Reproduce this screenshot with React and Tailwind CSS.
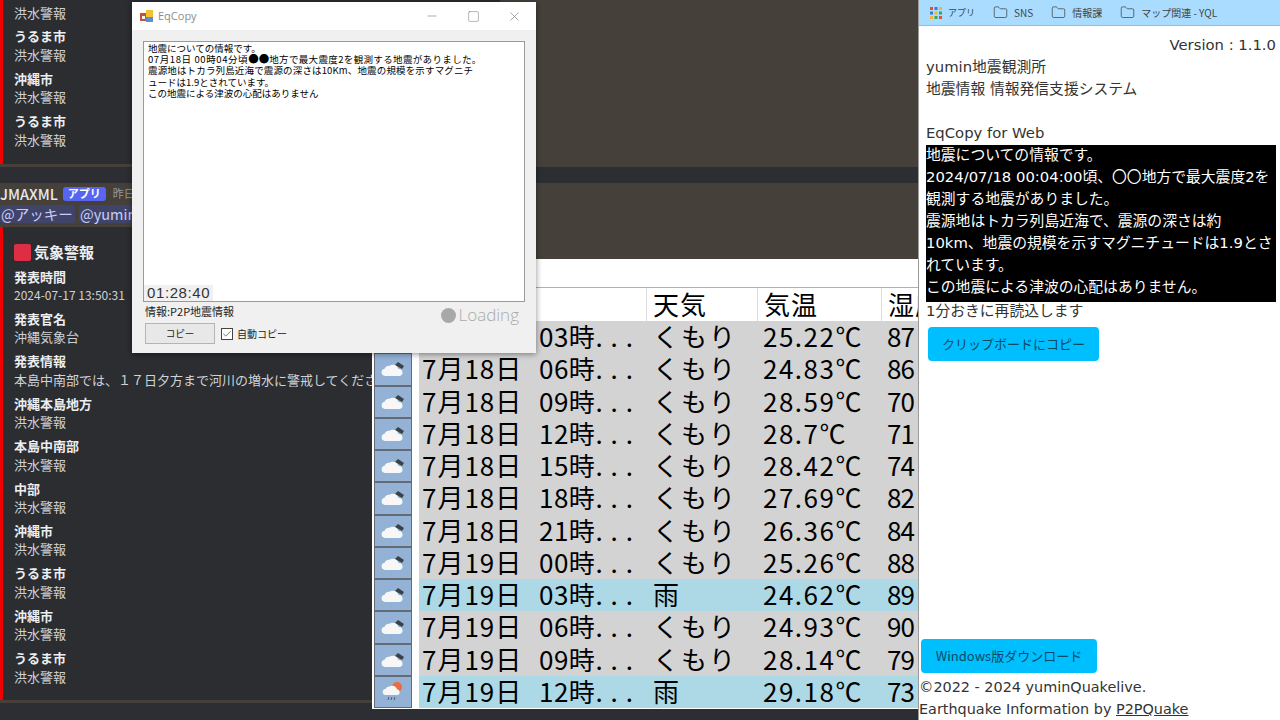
import { Minus, Square, X, Check, Folder } from "lucide-react";

const jp = "font-['Noto_Sans_CJK_JP',sans-serif]";

const topFields = [["うるま市", "洪水警報"], ["沖縄市", "洪水警報"], ["うるま市", "洪水警報"]];

const alertFields = [
  ["発表時間", "2024-07-17 13:50:31", "text-[12px]"],
  ["発表官名", "沖縄気象台"],
  ["発表情報", "本島中南部では、１７日夕方まで河川の増水に警戒してください。"],
  ["沖縄本島地方", "洪水警報"],
  ["本島中南部", "洪水警報"],
  ["中部", "洪水警報"],
  ["沖縄市", "洪水警報"],
  ["うるま市", "洪水警報"],
  ["沖縄市", "洪水警報"],
  ["うるま市", "洪水警報"],
];

const forecast = [
  { date: "7月18日", time: "03時", weather: "くもり", temp: "25.22", hum: "87" },
  { date: "7月18日", time: "06時", weather: "くもり", temp: "24.83", hum: "86" },
  { date: "7月18日", time: "09時", weather: "くもり", temp: "28.59", hum: "70" },
  { date: "7月18日", time: "12時", weather: "くもり", temp: "28.7", hum: "71" },
  { date: "7月18日", time: "15時", weather: "くもり", temp: "28.42", hum: "74" },
  { date: "7月18日", time: "18時", weather: "くもり", temp: "27.69", hum: "82" },
  { date: "7月18日", time: "21時", weather: "くもり", temp: "26.36", hum: "84" },
  { date: "7月19日", time: "00時", weather: "くもり", temp: "25.26", hum: "88" },
  { date: "7月19日", time: "03時", weather: "雨", temp: "24.62", hum: "89" },
  { date: "7月19日", time: "06時", weather: "くもり", temp: "24.93", hum: "90" },
  { date: "7月19日", time: "09時", weather: "くもり", temp: "28.14", hum: "79" },
  { date: "7月19日", time: "12時", weather: "雨", temp: "29.18", hum: "73", sun: true },
];

function Field({ label, value, valueClass }) {
  return (
    <div className="mb-[5.6px] text-[13px] leading-[18.4px] whitespace-nowrap">
      <div className="font-bold text-[#eceef0]">{label}</div>
      <div className={`text-[#cfd2d6] ${valueClass || ""}`}>{value}</div>
    </div>
  );
}

function CloudIcon() {
  return (
    <svg width="24" height="16" viewBox="0 0 24 16">
      <path d="M14 4 L17 1 L23 5 L21 8 Z" fill="#3d4046" />
      <path d="M4 15 a3.7 3.7 0 0 1 -.5 -7.3 a5 5 0 0 1 5 -3 a6 6 0 0 1 9 3.3 a3.6 3.6 0 0 1 1.5 7 Z" fill="#f7f7f7" />
    </svg>
  );
}

function RainSunIcon() {
  return (
    <svg width="22" height="22" viewBox="0 0 22 22">
      <circle cx="15" cy="6" r="5" fill="#ee6b3f" />
      <path d="M4 14 a3 3 0 0 1 -.5 -6 a4 4 0 0 1 4 -2.500 a5 5 0 0 1 7.500 2.800 a3 3 0 0 1 1 5.700 Z" fill="#f7f7f7" />
      <path d="M7 16 L6 19 M10 16 L9 19 M13 16 L12 19" stroke="#555b66" strokeWidth="1" />
    </svg>
  );
}

function DiscordPane() {
  return (
    <div className={`w-[918px] h-[720px] shrink-0 bg-[#2d2e33] ${jp}`}>
      <div className="h-[167px] bg-[#45403a] pb-[3px]">
        <div className="w-[500px] h-[164px] bg-[#2b2d31] border-l-[3px] border-[#f00000] pl-[11px] pt-[3.5px] overflow-hidden">
          <div className="h-[18.4px] mb-[5.6px] text-[13px] leading-[18.4px] text-[#cfd2d6]">洪水警報</div>
          {topFields.map((f, i) => (
            <Field key={i} label={f[0]} value={f[1]} />
          ))}
        </div>
      </div>
      <div className="h-[16px]" />
      <div className="h-[520px] bg-[#45403a]">
        <div className="h-[44px]">
          <div className="flex items-center h-[21px]">
            <span className="text-[14.5px] leading-[21px] font-medium text-[#e8e8e8]">JMAXML</span>
            <span className="ml-[5px] h-[14px] w-[43px] flex items-center justify-center rounded-[3px] bg-[#5865f2] text-[11px] font-bold text-white">アプリ</span>
            <span className="ml-[7px] text-[11px] text-[#949ba4]">昨日</span>
          </div>
          <div className="flex gap-[4px] mt-[1px] text-[14.5px] leading-[18px] text-[#c9cdfb] whitespace-nowrap">
            <span className="w-[75px] bg-[#3f4468] rounded-[3px] pl-[1px]">@アッキー</span>
            <span className="bg-[#3f4468] rounded-[3px] px-[1px]">@yumin</span>
          </div>
        </div>
        <div className="w-[520px] h-[473px] bg-[#2b2d31] border-l-[3px] border-[#f00000] pl-[11px] pt-[14px] overflow-hidden">
          <div className="flex items-center h-[22px] mb-[4.5px]">
            <span className="w-[17px] h-[17px] rounded-[2px] bg-[#dd2e44]" />
            <span className="ml-[3px] text-[15px] font-bold text-[#eceef0]">気象警報</span>
          </div>
          {alertFields.map((f, i) => (
            <Field key={i} label={f[0]} value={f[1]} valueClass={f[2]} />
          ))}
        </div>
      </div>
    </div>
  );
}

function ForecastWindow() {
  return (
    <div className={`absolute left-[372px] top-[259px] w-[546px] h-[450px] bg-white overflow-hidden text-[26px] leading-[32px] text-black ${jp}`}>
      <div className="h-[28px] border-b border-[#b0b0b0] box-content" />
      <div className="ml-[47px] h-[33px] grid grid-cols-[227px_111px_124px_1fr]">
        <div />
        <div className="border-l border-[#dcdcdc] pl-[6px] tracking-[1px]">天気</div>
        <div className="border-l border-[#dcdcdc] pl-[6px] tracking-[1px]">気温</div>
        <div className="border-l border-[#dcdcdc] pl-[6px] tracking-[1px] whitespace-nowrap">湿度</div>
      </div>
      {forecast.map((r, i) => (
        <div key={i} className="flex h-[32.25px] leading-[30px]">
          <div className="ml-[2px] w-[38px] flex items-center justify-center bg-[#93b2d6] border border-[#666b73]">
            {r.sun ? <RainSunIcon /> : <CloudIcon />}
          </div>
          <div className={`ml-[7px] w-[499px] grid grid-cols-[227px_111px_124px_1fr] whitespace-nowrap ${r.weather === "雨" ? "bg-[#add8e6]" : "bg-[#d3d3d3]"}`}>
            <div className="pl-[3px] flex">
              <span className="w-[117px] tracking-[1px]">{r.date}</span>
              <span className="tracking-[0.5px]">{r.time}<span className="tracking-[8px]">...</span></span>
            </div>
            <div className="pl-[7px] tracking-[2px]">{r.weather}</div>
            <div className="pl-[6px] tracking-[1.5px]">{r.temp}℃</div>
            <div className="pl-[6px] tracking-[-1px]">{r.hum}</div>
          </div>
        </div>
      ))}
    </div>
  );
}

function EqCopyWindow() {
  return (
    <div className={`absolute left-[132px] top-[2px] w-[404px] h-[351px] bg-[#f0f0f0] shadow-[0_1px_6px_rgba(0,0,0,0.45)] flex flex-col ${jp}`}>
      <div className="h-[28px] bg-white flex items-center pl-[8px] shrink-0">
        <svg width="13" height="13" viewBox="0 0 13 13">
          <rect x="0" y="3" width="7" height="8" fill="#c8503c" />
          <rect x="6" y="0" width="7" height="7" fill="#f2c230" />
          <rect x="6" y="7" width="7" height="5" fill="#5d8fd0" />
          <rect x="2" y="6" width="3" height="3" fill="#f4f4f4" />
        </svg>
        <span className="ml-[5px] text-[11px] text-[#8c8c8c] font-['Open_Sans',sans-serif]">EqCopy</span>
        <div className="ml-auto flex items-center text-[#777] pr-[14px] gap-[27.5px]">
          <Minus size={14} strokeWidth={1} />
          <Square size={13} strokeWidth={1} />
          <X size={15} strokeWidth={1} />
        </div>
      </div>
      <div className="relative mx-[11px] mt-[11px] h-[261px] bg-white border border-[#9a9a9a] pl-[4px] pt-[1px] text-[9.5px] leading-[11.2px] text-black whitespace-pre-line shrink-0">
        地震についての情報です。{"\n"}<span className="tracking-[0.6px]">07月18日 00時04分頃</span><span className="text-[10.5px] leading-[0]">●●</span><span className="tracking-[0.35px]">地方で最大震度2を観測する地震がありました。</span>{"\n"}<span className="tracking-[0.15px]">震源地はトカラ列島近海で震源の深さは10Km、地震の規模を示すマグニチ</span>{"\n"}ュードは1.9とされています。{"\n"}この地震による津波の心配はありません
        <div className="absolute left-0 bottom-0 w-[69px] h-[16px] bg-[#f0f0f0] pl-[3px] text-[15px] leading-[16px] tracking-[0.6px] text-[#333] font-['Liberation_Sans',sans-serif]">
          01:28:40
        </div>
      </div>
      <div className="flex mx-[13px] mt-[2px]">
        <div>
          <div className="text-[11px] leading-[14px] text-[#222]">情報:P2P地震情報</div>
          <div className="flex items-center mt-[5px]">
            <div className="w-[70px] h-[21px] border border-[#b4b4b4] bg-[#e8e8e8] flex items-center justify-center text-[9.5px] text-[#222]">コピー</div>
            <div className="ml-[6px] w-[12px] h-[12px] border border-[#444] bg-white flex items-center justify-center">
              <Check size={10} strokeWidth={1.5} className="text-[#222]" />
            </div>
            <span className="ml-[4px] text-[10px] text-[#222]">自動コピー</span>
          </div>
        </div>
        <div className="ml-auto mr-[4px] mt-[1px] flex items-center h-[20px]">
          <span className="w-[15px] h-[15px] rounded-full bg-[#a8a8a8]" />
          <span className="ml-[2px] text-[17px] font-light text-[#aaa] font-['Open_Sans',sans-serif]">Loading</span>
        </div>
      </div>
    </div>
  );
}

function Bookmark({ label, children }) {
  return (
    <div className="flex items-center gap-[6px]">
      {children}
      <span>{label}</span>
    </div>
  );
}

function RightPane() {
  return (
    <div className="w-[362px] h-[720px] shrink-0 bg-white border-l border-[#9a9a9a] flex flex-col text-[#333] text-[14.8px] leading-[22px] font-['DejaVu_Sans','Noto_Sans_CJK_JP',sans-serif]">
      <div className="h-[26px] bg-[#a9dcff] border-b border-[#8fbcd8] flex items-center pl-[11px] gap-[18px] text-[10px] text-[#444] shrink-0 font-['Noto_Sans_CJK_JP',sans-serif]">
        <Bookmark label={<span className="text-[9px]">アプリ</span>}>
          <svg width="12" height="12" viewBox="0 0 12 12">
            {[0, 1, 2].map((y) =>
              [0, 1, 2].map((x) => (
                <rect key={`${x}${y}`} x={x * 4.5} y={y * 4.5} width="3" height="3" fill={["#e0503c", "#3c78d8", "#f2b632", "#3aa757"][(x + y) % 4]} />
              ))
            )}
          </svg>
        </Bookmark>
        <Bookmark label="SNS"><Folder size={15} strokeWidth={1.2} /></Bookmark>
        <Bookmark label="情報課"><Folder size={15} strokeWidth={1.2} /></Bookmark>
        <Bookmark label="マップ関連 - YQL"><Folder size={15} strokeWidth={1.2} /></Bookmark>
      </div>
      <div className="text-right pr-[4px] pt-[8px]">Version : 1.1.0</div>
      <div className="pl-[7px]">
        <div>yumin地震観測所</div>
        <div>地震情報 情報発信支援システム</div>
        <div className="mt-[22px]">EqCopy for Web</div>
      </div>
      <div className="ml-[7px] mr-[4px] mt-[1px] h-[157px] bg-black text-white">
        <div className="-mt-[1px] whitespace-pre-line">
          {"地震についての情報です。\n2024/07/18 00:04:00頃、〇〇地方で最大震度2を\n観測する地震がありました。\n震源地はトカラ列島近海で、震源の深さは約\n10km、地震の規模を示すマグニチュードは1.9とさ\nれています。\nこの地震による津波の心配はありません。"}
        </div>
      </div>
      <div className="pl-[7px] leading-[18px]">1分おきに再読込します</div>
      <div className="ml-[9px] mt-[7px] w-[171px] h-[34px] rounded-[4px] bg-[#00bfff] flex items-center justify-center text-[#0b4a66] text-[13px] font-['Noto_Sans_CJK_JP',sans-serif]">
        クリップボードにコピー
      </div>
      <div className="mt-auto ml-[2px] w-[176px] h-[34px] rounded-[4px] bg-[#00bfff] flex items-center justify-center text-[#0b4a66] text-[13px] font-['Noto_Sans_CJK_JP',sans-serif]">
        Windows版ダウンロード
      </div>
      <div className="h-[47px] pt-[3px] whitespace-nowrap text-[14.4px]">
        <div>©2022 - 2024 yuminQuakelive.</div>
        <div>Earthquake Information by <span className="underline">P2PQuake</span></div>
      </div>
    </div>
  );
}

export default function App() {
  return (
    <div className="relative w-[1280px] h-[720px] overflow-hidden flex bg-[#2d2e33]">
      <DiscordPane />
      <RightPane />
      <ForecastWindow />
      <EqCopyWindow />
    </div>
  );
}
